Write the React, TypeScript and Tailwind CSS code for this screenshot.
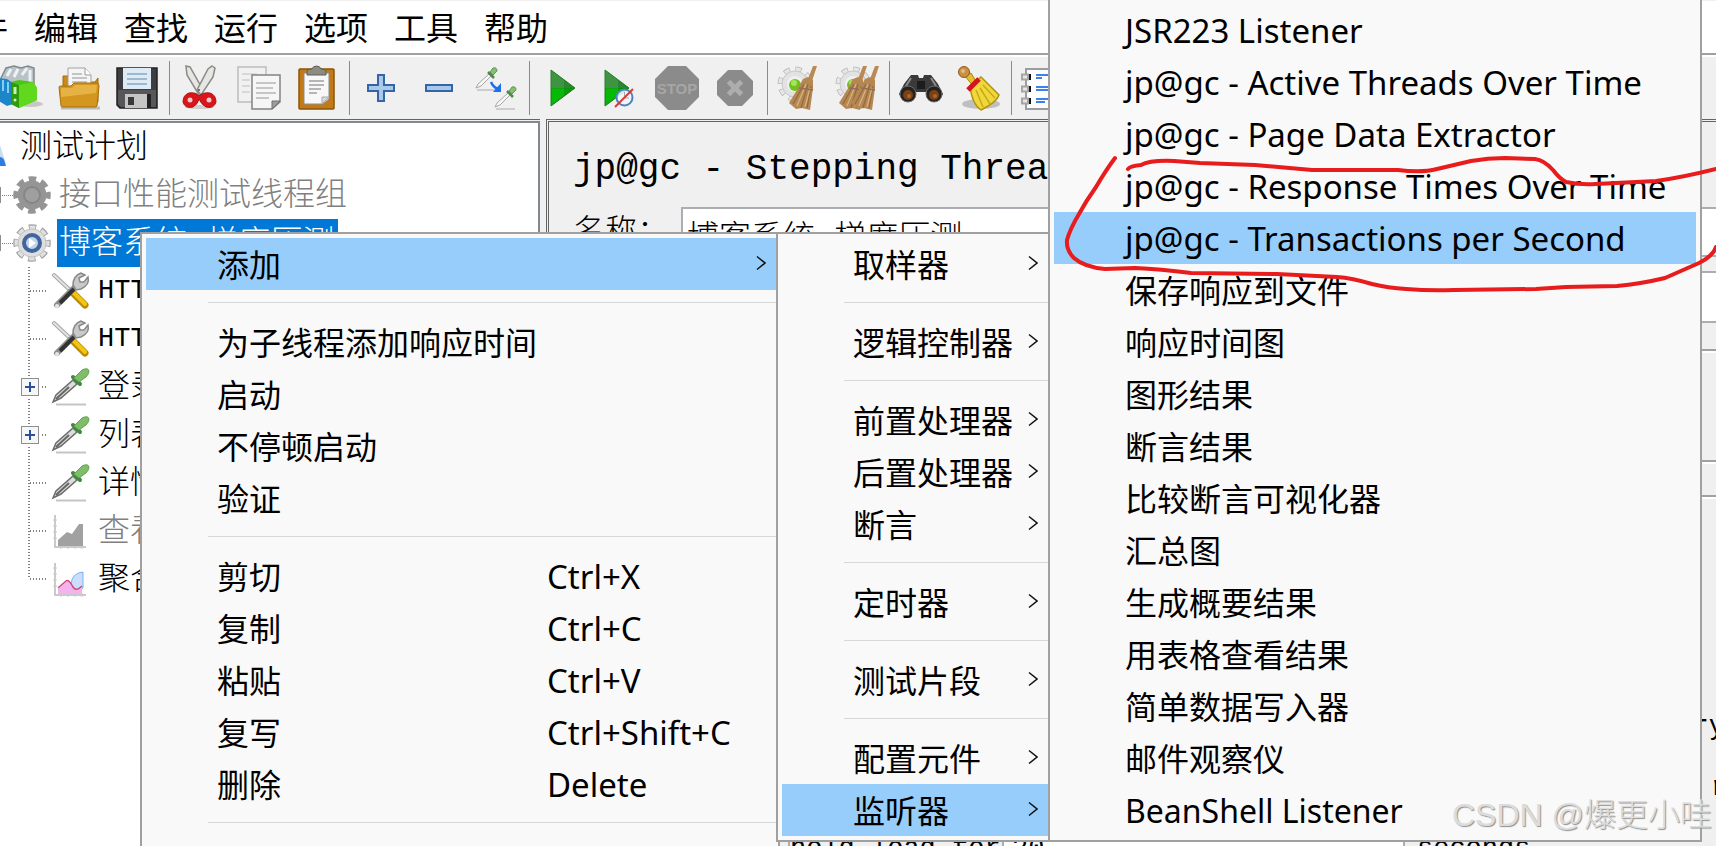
import React from 'react';
import clsx from 'clsx';

interface MenuEntry {
  label?: string;
  shortcut?: string;
  submenu?: boolean;
  active?: boolean;
  separator?: boolean;
  latin?: boolean;
}

interface TreeRowProps {
  label: string;
  icon: React.ReactNode;
  level?: 1 | 2;
  expandable?: boolean;
  last?: boolean;
  disabled?: boolean;
  selected?: boolean;
  latin?: boolean;
}

const menuBar = ['文件', '编辑', '查找', '运行', '选项', '工具', '帮助'];

const contextMenu: MenuEntry[] = [
  { label: '添加', submenu: true, active: true },
  { separator: true },
  { label: '为子线程添加响应时间' },
  { label: '启动' },
  { label: '不停顿启动' },
  { label: '验证' },
  { separator: true },
  { label: '剪切', shortcut: 'Ctrl+X' },
  { label: '复制', shortcut: 'Ctrl+C' },
  { label: '粘贴', shortcut: 'Ctrl+V' },
  { label: '复写', shortcut: 'Ctrl+Shift+C' },
  { label: '删除', shortcut: 'Delete' },
  { separator: true }
];

const addMenu: MenuEntry[] = [
  { label: '取样器', submenu: true },
  { separator: true },
  { label: '逻辑控制器', submenu: true },
  { separator: true },
  { label: '前置处理器', submenu: true },
  { label: '后置处理器', submenu: true },
  { label: '断言', submenu: true },
  { separator: true },
  { label: '定时器', submenu: true },
  { separator: true },
  { label: '测试片段', submenu: true },
  { separator: true },
  { label: '配置元件', submenu: true },
  { label: '监听器', submenu: true, active: true }
];

const listenerMenu: MenuEntry[] = [
  { label: 'JSR223 Listener', latin: true },
  { label: 'jp@gc - Active Threads Over Time', latin: true },
  { label: 'jp@gc - Page Data Extractor', latin: true },
  { label: 'jp@gc - Response Times Over Time', latin: true },
  { label: 'jp@gc - Transactions per Second', latin: true, active: true },
  { label: '保存响应到文件' },
  { label: '响应时间图' },
  { label: '图形结果' },
  { label: '断言结果' },
  { label: '比较断言可视化器' },
  { label: '汇总图' },
  { label: '生成概要结果' },
  { label: '用表格查看结果' },
  { label: '简单数据写入器' },
  { label: '邮件观察仪' },
  { label: 'BeanShell Listener' }
];

/* ---------- toolbar icons ---------- */

const Icon: React.FC<{ children: React.ReactNode }> = ({ children }) => (
  <svg viewBox="0 0 44 44" className="w-11 h-11 overflow-visible" aria-hidden="true">
    {children}
  </svg>
);

const TemplatesIcon = () => (
  <Icon>
    <ellipse cx="32" cy="38" rx="12" ry="3" fill="#b5b5b5" opacity="0.7" />
    <path d="M2 12 L7 2 L15 0 L22 2 L29 0 L35 2 V28 H4Z" fill="#b9c2c7" stroke="#7f8b91" strokeWidth="1.5" />
    <path d="M8 10 L12 3 M15 11 L19 3 M23 9 L28 2 M31 4 V16" stroke="#eef2f4" strokeWidth="3" />
    <path d="M0 12 L8 13 L14 17 V38 L8 40 L0 35Z" fill="#1c86c9" />
    <path d="M4 14 V25 M9 16 V27" stroke="#7fd0f5" strokeWidth="2" />
    <path d="M12 16 L20 14 L34 16 L38 22 V34 L20 42 L12 38Z" fill="#4cc417" />
    <path d="M12 16 L20 19 V42 L12 38Z" fill="#2f9a0c" />
    <path d="M20 19 L34 16 L38 22 V34 L20 42Z" fill="#5fd81e" />
    <circle cx="16" cy="34" r="1.5" fill="#d8f7c4" />
    <path d="M16 21 V28" stroke="#c8f2ae" strokeWidth="3" />
  </Icon>
);

const OpenIcon = () => (
  <Icon>
    <path d="M4 42 H43" stroke="#bcbcbc" strokeWidth="3" />
    <path d="M6 10 H14 V16 H38 L41 12 V36 H6Z" fill="#c98a1a" stroke="#a56c0c" />
    <path d="M11 2 H28 L34 9 V24 H11Z" fill="#f5f5f5" stroke="#a3a3a3" />
    <path d="M28 2 V9 H34" fill="#fff" stroke="#9a9a9a" />
    <path d="M15 8 H25 M15 12 H30 M15 16 H30" stroke="#b4b4b4" strokeWidth="1.5" />
    <path d="M2 21 Q2 20 4 20 H14 L17 17 H40 Q42 17 42 20 L40 40 Q39 41 38 41 H6 Q4 41 4 40Z" fill="#d3961f" stroke="#a8700d" />
    <path d="M4 22 H15 L18 19 H40 L39 27 L4 31Z" fill="#ebb94c" opacity="0.8" />
  </Icon>
);

const SaveIcon = () => (
  <Icon>
    <path d="M2 2 H42 V42 H5 L2 39Z" fill="#3e3e42" stroke="#222" strokeWidth="1.5" />
    <path d="M3 24 H41 V41 H6 L3 38Z" fill="#56565b" />
    <rect x="8" y="2" width="28" height="21" fill="#deebf5" />
    <path d="M12 8 H32 M12 13 H32 M12 18 H32" stroke="#9db8cf" strokeWidth="2" />
    <rect x="10" y="28" width="22" height="14" fill="#c5c5c5" />
    <rect x="13" y="31" width="6" height="8" fill="#3a3a3d" />
    <rect x="32" y="28" width="4" height="14" fill="#222" />
  </Icon>
);

const CutIcon = () => (
  <Icon>
    <ellipse cx="20" cy="41" rx="14" ry="2" fill="#cfcfcf" />
    <path d="M7 0 L11 1 L24 24 L20 29 L8 9Z" fill="#e6e6e4" stroke="#8a8a86" strokeWidth="1.5" />
    <path d="M33 0 L36 2 L34 11 L22 29 L18 24 L29 3Z" fill="#e6e6e4" stroke="#8a8a86" strokeWidth="1.5" />
    <circle cx="20" cy="24" r="1" fill="#555" />
    <path d="M20 30 Q17 26 10 27 Q4 29 4 36 Q6 43 14 41 Q19 38 20 33 Q22 38 27 41 Q35 43 37 36 Q37 29 31 27 Q24 26 20 30Z" fill="#d8151b" stroke="#b50e13" />
    <circle cx="11" cy="34" r="2.5" fill="#eecaca" />
    <circle cx="30" cy="34" r="2.5" fill="#eecaca" />
  </Icon>
);

const CopyIcon = () => (
  <Icon>
    <rect x="1" y="1" width="28" height="35" fill="#f1f1f1" stroke="#bcbcbc" strokeWidth="1.5" />
    <path d="M5 8 H20 M5 14 H13 M5 20 H13 M5 26 H13" stroke="#cfcfcf" strokeWidth="1.5" />
    <path d="M15 9 H43 V36 L35 43 H15Z" fill="#f6f6f6" stroke="#838383" strokeWidth="1.5" />
    <path d="M19 17 H39 M19 22 H36 M19 27 H39 M19 32 H32" stroke="#b6b6b6" strokeWidth="1.5" />
    <path d="M43 35 H35 V43Z" fill="#9c9c9c" stroke="#6f6f6f" />
  </Icon>
);

const PasteIcon = () => (
  <Icon>
    <rect x="4" y="3" width="35" height="40" rx="1" fill="#c07a17" stroke="#8b5508" strokeWidth="1.5" />
    <path d="M9 7 H34 V33 L28 38 H9Z" fill="#f8f8f8" stroke="#8d8d8d" />
    <path d="M14 15 H29 M14 19 H29 M14 23 H26 M14 27 H22" stroke="#9f9f9f" strokeWidth="1.5" />
    <path d="M34 31 H27 V38Z" fill="#d9d9d9" stroke="#aaa" />
    <path d="M12 9 V5 Q13 3 17 3 Q18 0 21.5 0 Q25 0 26 3 Q30 3 31 5 V9Z" fill="#8c8c82" stroke="#5e5e57" />
  </Icon>
);

const PlusIcon = () => (
  <Icon>
    <path d="M19 9 H25 V19 H35 V25 H25 V35 H19 V25 H9 V19 H19Z" fill="#a9c8ec" stroke="#3465a4" strokeWidth="2" />
  </Icon>
);

const MinusIcon = () => (
  <Icon>
    <rect x="9" y="19" width="26" height="6" fill="#a9c8ec" stroke="#3465a4" strokeWidth="2" />
  </Icon>
);

const MiniDropper = () => (
  <g>
    <path d="M3 23 H22" stroke="#a9a9a9" />
    <path d="M2 21 L4 17 L15 7 L17 9 L7 19Z" fill="#f7f7f7" stroke="#a6a6a6" />
    <path d="M14 5 L20 11" stroke="#4f8a44" strokeWidth="2.5" />
    <path d="M16 5 L19 1 Q23 0 23 4 L19 8Z" fill="#86bf74" stroke="#5c9a50" />
  </g>
);

const ToggleIcon = () => (
  <Icon>
    <g transform="translate(-1 1)"><MiniDropper /></g>
    <g transform="translate(18 20)"><MiniDropper /></g>
    <path d="M16 16 Q18 21 23 23" fill="none" stroke="#1d6ff2" strokeWidth="2.5" />
    <path d="M26 17 V26 H18Z" fill="#1d6ff2" />
  </Icon>
);

const PlayShape = () => (
  <g>
    <path d="M12 4 L36 22 L12 40Z" fill="#0aa80a" stroke="#2a7a2a" strokeWidth="1" />
    <path d="M12.5 5 L35 22 H12.5Z" fill="#3f9443" />
    <path d="M13 23 H33 L13 38Z" fill="#07b907" />
    <path d="M25 14 L36 22 L25 30Z" fill="#0b6b10" opacity="0.35" />
  </g>
);

const StartIcon = () => (
  <Icon>
    <PlayShape />
  </Icon>
);

const StartNoPauseIcon = () => (
  <Icon>
    <g transform="translate(-4 0)"><PlayShape /></g>
    <circle cx="27.5" cy="31.5" r="8" fill="#f2f5fa" fillOpacity="0.85" stroke="#4a83c4" strokeWidth="2" />
    <path d="M27.5 26 V32 H32" fill="none" stroke="#9ab" />
    <path d="M18 41 L36 23" stroke="#d63a3a" strokeWidth="2" />
  </Icon>
);

const StopIcon = () => (
  <Icon>
    <path d="M13 0 H31 L44 13 V31 L31 44 H13 L0 31 V13Z" fill="#8b8b8b" />
    <text x="22" y="28" textAnchor="middle" fontSize="15" fontWeight="700" fill="#a6a6a6" fontFamily="Liberation Sans, sans-serif">
      STOP
    </text>
  </Icon>
);

const ShutdownIcon = () => (
  <Icon>
    <path d="M15 4 H29 L40 15 V29 L29 40 H15 L4 29 V15Z" fill="#8b8b8b" />
    <path d="M15.5 15.5 L28.5 28.5 M28.5 15.5 L15.5 28.5" stroke="#adadad" strokeWidth="5" />
  </Icon>
);

const GearShape = () => (
  <g>
    <circle cx="18" cy="18" r="15" fill="none" stroke="#b4b4b4" strokeWidth="5" strokeDasharray="6.2 5.58" />
    <circle cx="18" cy="18" r="15" fill="none" stroke="#e6e6e6" strokeWidth="3.5" strokeDasharray="5 6.78" strokeDashoffset="-0.6" />
    <circle cx="18" cy="18" r="13" fill="#e2e2e2" stroke="#c9c9c9" />
    <circle cx="18" cy="18" r="8" fill="#f0f0f0" />
    <circle cx="18" cy="19" r="6" fill="#6fc21c" />
    <circle cx="17" cy="17" r="3" fill="#a6e35c" />
  </g>
);

const BroomShape = () => (
  <g>
    <path d="M36 0 H40 L35 15 L31 13Z" fill="#b98a55" />
    <path d="M26 13 L31 11 L36 14 L36 22 L33 44 L25 42 L19 43 L12 37 L20 24Z" fill="#b48753" />
    <path d="M27 18 L16 38 M31 18 L24 42 M34 20 L30 42" stroke="#96693b" strokeWidth="1.2" />
    <path d="M29 18 L20 40 M33 22 L28 41" stroke="#d9b483" strokeWidth="1.2" />
    <path d="M22 22 L36 24" stroke="#8d6f5a" strokeWidth="1.5" />
  </g>
);

const ClearIcon = () => (
  <Icon>
    <GearShape />
    <BroomShape />
  </Icon>
);

const ClearAllIcon = () => (
  <Icon>
    <GearShape />
    <g transform="translate(-8 0)"><BroomShape /></g>
    <g transform="translate(4 0)"><BroomShape /></g>
  </Icon>
);

const SearchIcon = () => (
  <Icon>
    <path d="M5 18 L12 9 L19 9 L20 12 H24 L25 9 L32 9 L39 18 L44 28 L40 35 L30 35 L27 26 H17 L14 35 L4 35 L0 28Z" fill="#3a3a3a" />
    <path d="M12 12 L7 20 M32 12 L37 20" stroke="#8a8a8a" strokeWidth="2" />
    <rect x="18" y="15" width="8" height="8" fill="#1c1c1c" />
    <circle cx="9" cy="28" r="8" fill="#222" stroke="#6b6b6b" />
    <circle cx="35" cy="28" r="8" fill="#222" stroke="#6b6b6b" />
    <circle cx="9" cy="29" r="5" fill="#7b4014" />
    <circle cx="35" cy="29" r="5" fill="#7b4014" />
    <circle cx="10" cy="30" r="2" fill="#a8652c" />
    <circle cx="36" cy="30" r="2" fill="#a8652c" />
  </Icon>
);

const ResetSearchIcon = () => (
  <Icon>
    <ellipse cx="24" cy="38" rx="19" ry="5" fill="#bfbfbf" />
    <path d="M8 10 L16 20 L20 17 L14 7Z" fill="#e3c02c" stroke="#a68612" />
    <circle cx="7" cy="6" r="5.5" fill="#c98f45" stroke="#8a5a1d" />
    <circle cx="6" cy="5" r="2" fill="#e6bb7c" />
    <path d="M13 20 L24 11 L42 29 Q40 36 24 44 Q15 38 13 20Z" fill="#f0d83a" stroke="#b09312" strokeWidth="1.5" />
    <path d="M19 24 L26 41 M23 22 L33 38 M26 19 L38 32" stroke="#c7a91c" strokeWidth="1.5" />
    <path d="M11 24 L22 13" stroke="#d3141c" strokeWidth="5" />
  </Icon>
);

const FunctionHelperIcon = () => (
  <Icon>
    <rect x="5" y="3" width="38" height="40" fill="#fdfdfd" stroke="#9c9c9c" strokeWidth="2" />
    <path d="M15 9 H40 M15 12 H21 M15 21 H40 M15 24 H40 M15 33 H40 M15 36 H24" stroke="#3b82f0" strokeWidth="2" />
    <path d="M0 11 H8 M0 23 H8 M0 35 H8" stroke="#a5a5a5" strokeWidth="7" />
    <path d="M2 11 H6 M2 23 H6 M2 35 H6" stroke="#e6e6e6" strokeWidth="3" />
    <path d="M9 8 V14 M9 20 V26 M9 32 V38" stroke="#151515" strokeWidth="2" />
  </Icon>
);

const toolbarGroups = [
  [
    { name: '模板', icon: <TemplatesIcon /> },
    { name: '打开', icon: <OpenIcon /> },
    { name: '保存', icon: <SaveIcon /> }
  ],
  [
    { name: '剪切', icon: <CutIcon /> },
    { name: '复制', icon: <CopyIcon /> },
    { name: '粘贴', icon: <PasteIcon /> }
  ],
  [
    { name: '全部展开', icon: <PlusIcon /> },
    { name: '全部折叠', icon: <MinusIcon /> },
    { name: '切换', icon: <ToggleIcon /> }
  ],
  [
    { name: '启动', icon: <StartIcon /> },
    { name: '不停顿启动', icon: <StartNoPauseIcon /> },
    { name: '停止', icon: <StopIcon /> },
    { name: '关闭', icon: <ShutdownIcon /> }
  ],
  [
    { name: '清除', icon: <ClearIcon /> },
    { name: '清除全部', icon: <ClearAllIcon /> }
  ],
  [
    { name: '查找', icon: <SearchIcon /> },
    { name: '重置搜索', icon: <ResetSearchIcon /> }
  ],
  [{ name: '函数助手', icon: <FunctionHelperIcon /> }]
];

/* ---------- tree icons ---------- */

const TreeIcon: React.FC<{ children: React.ReactNode }> = ({ children }) => (
  <svg viewBox="0 0 38 38" className="w-[38px] h-[38px] shrink-0 overflow-visible" aria-hidden="true">
    {children}
  </svg>
);

const ThreadGroupIcon: React.FC<{ disabled?: boolean }> = ({ disabled }) => (
  <TreeIcon>
    <circle cx="19" cy="19" r="15.5" fill="none" stroke={disabled ? '#959595' : '#a3a3a3'} strokeWidth="6.5" strokeDasharray="7.2 4.97" strokeDashoffset="3.6" />
    {!disabled && (
      <circle cx="19" cy="19" r="15" fill="none" stroke="#e0e0e0" strokeWidth="5" strokeDasharray="5.4 6.38" strokeDashoffset="2.7" />
    )}
    <circle cx="19" cy="19" r="14" fill={disabled ? '#959595' : '#dedede'} stroke={disabled ? '#959595' : '#c2c2c2'} />
    <circle cx="19" cy="19" r="8" fill={disabled ? '#9f9f9f' : '#c3d3ea'} stroke={disabled ? '#868686' : '#41659f'} strokeWidth={disabled ? 2 : 4} />
    {!disabled && <path d="M16 14 L23 19 L16 24Z" fill="#fff" />}
  </TreeIcon>
);

const ConfigIcon = () => (
  <TreeIcon>
    <path d="M2 3 L19 19" stroke="#a5a5a5" strokeWidth="4" strokeLinecap="round" />
    <path d="M2 3 L19 19" stroke="#e3e3e3" strokeWidth="2" strokeLinecap="round" />
    <path d="M22 22 L33 33" stroke="#b98a06" strokeWidth="7" strokeLinecap="round" />
    <path d="M22 21 L33 32" stroke="#f4c414" strokeWidth="4" strokeLinecap="round" />
    <path d="M5 33 L25 13" stroke="#8d8d8d" strokeWidth="6" strokeLinecap="round" />
    <path d="M8 31 L22 17" stroke="#333" strokeWidth="4" />
    <circle cx="5" cy="34" r="2" fill="#e8e8e8" />
    <path d="M21 13 Q21 4 29 1 L33 3 L27 6 L28 10 L32 10 L36 5 Q38 13 29 17 L24 18Z" fill="#c9c9c9" stroke="#8a8a8a" strokeWidth="1.5" />
  </TreeIcon>
);

const SamplerIcon = () => (
  <TreeIcon>
    <path d="M4 36.5 H34" stroke="#c4c4c4" strokeWidth="2" />
    <path d="M1 34 L4 27 L21 12 L25 16 L9 30Z" fill="#dcdcdc" stroke="#6c6c6c" strokeWidth="1.5" />
    <path d="M4 31 L17 19" stroke="#666" strokeWidth="2" />
    <path d="M21 9 L28 16" stroke="#3f8a3e" strokeWidth="4" strokeLinecap="round" />
    <path d="M22 10 L30 2 Q36 -1 37 3 Q37 6 34 9 L27 14Z" fill="#7fbd69" stroke="#62a354" />
  </TreeIcon>
);

const ListenerIcon: React.FC<{ disabled?: boolean }> = ({ disabled }) => (
  <TreeIcon>
    <path d="M3 3 V35 H34" fill="none" stroke="#b9b9b9" strokeWidth="1.5" />
    <path d="M1 8 H5 M1 14 H5 M1 20 H5 M1 26 H5 M9 33 V37 M16 33 V37 M23 33 V37 M30 33 V37" stroke="#c9c9c9" />
    {disabled ? (
      <path d="M6 34 V28 L15 20 L20 22 L27 12 H31 V34Z" fill="#a1a1a1" />
    ) : (
      <g>
        <path d="M19 24 Q20 13 31 12 V28 L25 32Z" fill="#c9defa" stroke="#7fb0ee" />
        <path d="M6 34 V29 L15 21 Q18 20 21 27 L25 30 L30 26 V34Z" fill="#f3b4ee" />
        <path d="M6 28 L14 21 Q17 19 21 27 Q24 32 30 26" fill="none" stroke="#cf4a78" strokeWidth="1.5" />
      </g>
    )}
  </TreeIcon>
);

/* ---------- building blocks ---------- */

const TreeRow: React.FC<TreeRowProps> = ({ label, icon, level = 2, expandable, last, disabled, selected, latin }) => (
  <li className="flex items-center h-12 whitespace-nowrap">
    {level === 1 ? (
      <svg viewBox="0 0 13 48" className="w-[13px] h-12 shrink-0" aria-hidden="true">
        <path d="M0.5 16 V32" stroke="#8e8e8e" />
        <path d="M2 24.5 H13" stroke="#808080" strokeDasharray="1 1" />
      </svg>
    ) : (
      <svg viewBox="0 0 52 48" className="w-[52px] h-12 shrink-0" aria-hidden="true">
        <path d={last ? 'M29 0 V24' : 'M29 0 V48'} stroke="#808080" strokeWidth="2" strokeDasharray="1 2" />
        <path d="M30 24 H48" stroke="#808080" strokeWidth="2" strokeDasharray="1 2" />
        {expandable && (
          <g>
            <rect x="19" y="13" width="22" height="22" fill="#fff" />
            <rect x="21.5" y="15.5" width="17" height="17" fill="#f6f6f6" stroke="#8e8e8e" />
            <path d="M25 24 H35 M30 19 V29" stroke="#2b4fa0" strokeWidth="2" />
          </g>
        )}
      </svg>
    )}
    {icon}
    <span
      className={clsx(
        'flex items-center h-12 ml-[6px] pl-[2px] pr-1',
        latin ? 'text-[27px]' : 'pt-1',
        disabled && 'text-[#808080]',
        selected && 'bg-[#0078d7] text-white'
      )}
    >
      {label}
    </span>
  </li>
);

const Chevron = () => (
  <svg viewBox="0 0 10 16" className="w-[10px] h-4 shrink-0 mb-1" aria-hidden="true">
    <path d="M1 1.5 L9 8 L1 14.5" fill="none" stroke="#111" strokeWidth="1.5" />
  </svg>
);

const Menu: React.FC<{ entries: MenuEntry[]; name: string; className: string }> = ({ entries, name, className }) => (
  <ul
    aria-label={name}
    className={clsx('absolute bg-[#f9f9f9] border-2 border-[#a0a0a0] py-1 pl-1 text-[32px] leading-[52px]', className)}
  >
    {entries.map((entry, index) =>
      entry.separator ? (
        <li key={index} className="h-[26px] pt-3 pl-[62px]">
          <hr className="border-[#d7d7d7]" />
        </li>
      ) : (
        <li key={index}>
          <button
            type="button"
            className={clsx(
              'flex items-center w-full h-[52px] pt-[2px] pl-[71px] pr-3 text-left whitespace-nowrap',
              entry.latin && 'text-[33px]',
              entry.active && 'bg-[#97cdfb]'
            )}
          >
            <span className={entry.shortcut ? 'w-[330px]' : 'flex-1'}>{entry.label}</span>
            {entry.shortcut && <span className="text-[33px]">{entry.shortcut}</span>}
            {entry.submenu && <Chevron />}
          </button>
        </li>
      )
    )}
  </ul>
);

const Divider = ({ className }: { className: string }) => (
  <div className={clsx('border-t-2 border-[#a0a0a0]', className)}>
    <div className="border-t-2 border-white" />
  </div>
);

const App: React.FC = () => {
  return (
    <div className="relative flex flex-col h-screen overflow-hidden bg-[#f0f0f0] text-black font-['Noto_Sans','Noto_Sans_CJK_SC',sans-serif]">
      <nav className="flex items-center gap-[26px] h-[55px] shrink-0 -ml-14 pt-[2px] bg-white border-t border-t-[#f0f0f0] border-b-2 border-b-[#a0a0a0] text-[32px]">
        {menuBar.map((item) => (
          <button key={item} type="button" className="shrink-0">
            {item}
          </button>
        ))}
      </nav>

      {/* Toolbar */}
      <div className="flex items-center h-16 shrink-0 -ml-2 border-t-2 border-white">
        {toolbarGroups.map((group, index) => (
          <React.Fragment key={index}>
            {index > 0 && (
              <div className="flex justify-center w-[6px] h-[54px] shrink-0">
                <div className="w-px bg-[#8a8a8a]" />
              </div>
            )}
            {group.map((tool) => (
              <button key={tool.name} type="button" aria-label={tool.name} className="flex justify-center w-[58px] shrink-0">
                {tool.icon}
              </button>
            ))}
          </React.Fragment>
        ))}
      </div>

      <main className="flex flex-1 min-h-0 gap-[6px] font-['Liberation_Mono','Noto_Sans_CJK_SC',monospace]">
        {/* Test plan tree */}
        <aside className="w-[540px] shrink-0 border-t border-[#646464] pt-px">
          <ul className="h-full bg-white border-t-2 border-r-2 border-[#828790] text-[32px] leading-none font-light">
            <li className="flex items-center h-12">
              <svg viewBox="0 0 20 40" className="w-5 h-10 shrink-0" aria-hidden="true">
                <path d="M0 18 L6 37 H0Z" fill="#c9ddf5" />
                <path d="M0 30 Q4 30 5 36 L6 39 H0Z" fill="#2f7be0" />
              </svg>
              <span className="pt-1">测试计划</span>
            </li>
            <TreeRow level={1} disabled label="接口性能测试线程组" icon={<ThreadGroupIcon disabled />} />
            <TreeRow level={1} selected label="博客系统-梯度压测" icon={<ThreadGroupIcon />} />
            <TreeRow latin label="HTTP" icon={<ConfigIcon />} />
            <TreeRow latin label="HTTP" icon={<ConfigIcon />} />
            <TreeRow expandable label="登录" icon={<SamplerIcon />} />
            <TreeRow expandable label="列表" icon={<SamplerIcon />} />
            <TreeRow label="详情" icon={<SamplerIcon />} />
            <TreeRow disabled label="查看" icon={<ListenerIcon disabled />} />
            <TreeRow last label="聚合" icon={<ListenerIcon />} />
          </ul>
        </aside>

        {/* Thread group form */}
        <section className="flex-1 min-w-0 border-t-[3px] border-l-[3px] border-double border-[#646464] font-light">
          <h1 className="h-[85px] pt-7 pl-6 text-4xl font-normal whitespace-nowrap">jp@gc - Stepping Threads Group</h1>
          <div className="flex pl-6 text-[32px]">
            <label htmlFor="name" className="w-[108px] shrink-0 pt-1 leading-[46px]">名称：</label>
            <input
              id="name"
              defaultValue="博客系统-梯度压测"
              className="flex-1 min-w-0 h-[50px] px-1 pt-1 bg-white border-y-2 border-l-2 border-[#abadb3] leading-none"
            />
          </div>
          <div className="pl-6 mt-[14px]">
            <input aria-label="注释" className="w-full h-[52px] bg-white border-y-2 border-l-2 border-[#abadb3]" />
          </div>
          <Divider className="mt-[26px] h-[111px]" />
          <Divider className="h-[35px]" />
          <Divider className="h-[202px]" />
          <div className="flex items-center h-[61px] pl-[1095px] text-[27px] font-normal whitespace-nowrap">every</div>
          <div className="flex items-center h-[61px] pl-[1162px] text-[27px] font-normal whitespace-nowrap">ramp-up</div>
          <div className="flex h-[61px] pl-[239px] text-[27px] font-normal">
            <label htmlFor="hold" className="flex items-center w-[214px] shrink-0 border-l-2 border-[#abadb3] whitespace-nowrap">
              hold load for
            </label>
            <input id="hold" defaultValue="20" className="w-[403px] px-2 bg-white border-x-2 border-[#abadb3]" />
            <span className="flex items-center pl-3">seconds</span>
          </div>
        </section>
      </main>

      <Menu name="右键菜单" entries={contextMenu} className="left-[140px] top-[232px] w-[640px] h-[640px]" />
      <Menu name="添加" entries={addMenu} className="left-[776px] top-[232px] w-[276px]" />
      <Menu name="监听器" entries={listenerMenu} className="left-[1048px] top-0 w-[654px] border-t-0 pr-1" />

      {/* Hand-drawn marker */}
      <svg viewBox="0 0 1716 846" className="absolute left-0 top-0 w-[1716px] h-[846px] pointer-events-none" aria-hidden="true">
        <g fill="none" stroke="#e81c1c" strokeWidth="4" strokeLinecap="round" strokeLinejoin="round">
          <path d="M1115 158 Q1106 170 1096 187 Q1086 201 1079 214 Q1070 229 1067 240 Q1066 250 1074 258 Q1084 267 1105 269 L1135 268 Q1160 269 1191 273 L1277 274 L1337 277 Q1352 278 1372 284 Q1388 288 1406 289 Q1430 291 1454 290 L1536 289 L1566 287 L1617 286 Q1640 284 1665 278 L1699 263 Q1713 256 1716 247" />
          <path d="M1128 169 Q1130 166 1141 165 Q1150 160 1174 161 L1200 163 L1255 165 L1312 170 L1398 170 Q1422 173 1437 169 L1471 161 Q1488 158 1505 158 L1535 159 Q1544 160 1553 170 Q1560 179 1566 182 Q1580 185 1596 184 L1656 181 Q1680 178 1716 169" />
        </g>
      </svg>

      <div className="absolute right-1 bottom-2 text-[32px] leading-[46px] whitespace-nowrap font-light text-[#dcdcdc] pointer-events-none [text-shadow:1px_1px_1px_#8f8f8f] font-['Liberation_Sans','Noto_Sans_CJK_SC',sans-serif]">
        CSDN @爆更小哇
      </div>
    </div>
  );
};

export default App;
